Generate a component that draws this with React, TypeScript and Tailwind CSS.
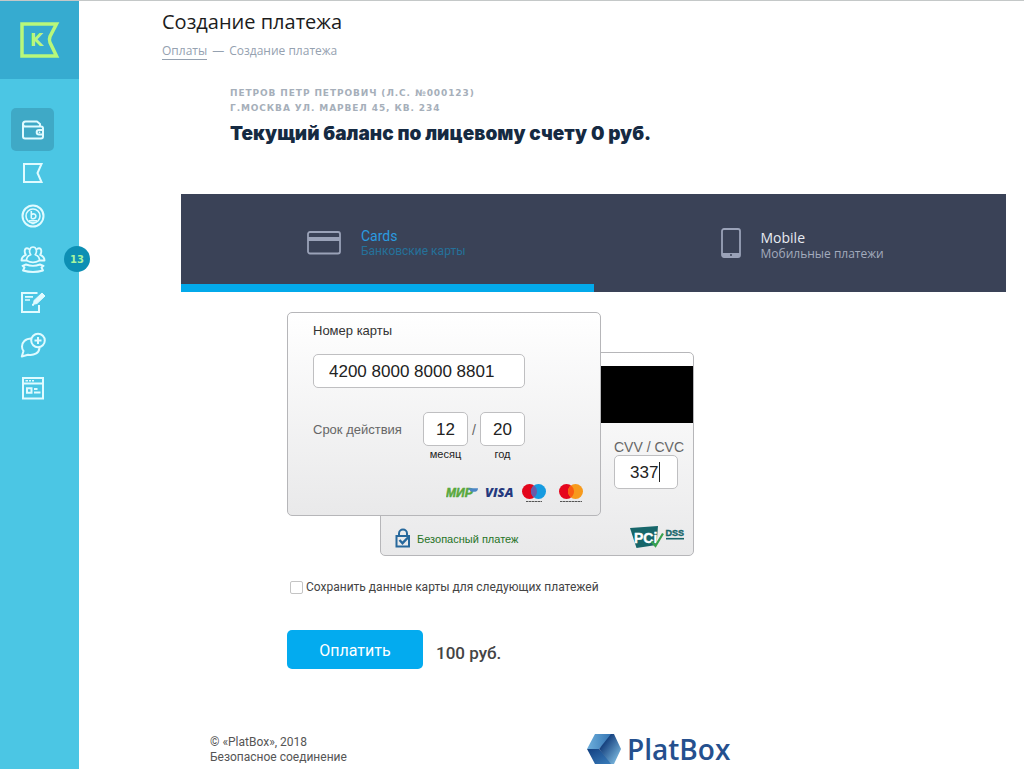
import React, { useState } from 'react';

const icons = {
  wallet: (
    <svg width="24" height="24" viewBox="0 0 24 24" fill="none" stroke="currentColor" strokeWidth="2" strokeLinejoin="round">
      <path d="M2 5.500v13a2 2 0 0 0 2 2h16a2 2 0 0 0 2-2V10.500a2 2 0 0 0-2-2H4.500A2.500 2.500 0 0 1 2 6a2.500 2.500 0 0 1 2.500-2.500H16l3 2.500v2.500" />
      <path d="M22 12h-4a2.300 2.300 0 0 0 0 4.600h4" />
      <path d="M18.500 13.500v1.600" strokeWidth="1.500" />
    </svg>
  ),
  flag: (
    <svg width="24" height="24" viewBox="0 0 24 24" fill="none" stroke="currentColor" strokeWidth="2">
      <path d="M3 3h17.500l-4 9 4 9H3z" />
    </svg>
  ),
  coin: (
    <svg width="24" height="24" viewBox="0 0 24 24" fill="none" stroke="currentColor" strokeWidth="2">
      <circle cx="12" cy="12" r="10.500" />
      <circle cx="12" cy="12" r="7" strokeWidth="1.600" />
      <path d="M10.300 7v7.500M10.300 10.500c3-1.500 5 .2 4.500 2.200s-2.500 2.300-4.500 1.800M8 16.800h8M10.500 19.500h3" strokeWidth="1.600" />
    </svg>
  ),
  people: (
    <svg width="26" height="28" viewBox="0 0 26 28" fill="none" stroke="currentColor" strokeWidth="1.900" strokeLinejoin="round">
      <path d="M6.500 15.500h-5C1.500 12.800 3 11 5.800 9.800 4 7 4.500 3.200 7 3.200c1 0 1.800.4 2.300 1.200M19.500 15.500h5c0-2.700-1.500-4.500-4.300-5.700C22 7 21.500 3.200 19 3.200c-1 0-1.800.4-2.300 1.200" />
      <path d="M10.800 9.700C8.500 7 9.500 2 13 2s4.500 5 2.200 7.700c3 1 4.300 3 4.300 5.800-4 2.200-9 2.200-13 0 0-2.800 1.300-4.800 4.300-5.800z" strokeWidth="1.700" />
      <path d="M6 19.500c4.500 1.800 9.500 1.800 14 0l3.500 1.300-2 1.700 1.500 3c-6 1.800-14 1.800-20 0l1.500-3-2-1.700z" />
    </svg>
  ),
  edit: (
    <svg width="26" height="24" viewBox="0 0 26 24" fill="none" stroke="currentColor" strokeWidth="2">
      <path d="M17.500 3H2v19h17v-7" />
      <path d="M5 6.800h8M5 10h5" strokeWidth="1.700" />
      <path d="m14 10.500 8-7.500 3 3-8 7.500-3.500.8z" fill="currentColor" strokeWidth="1" />
      <path d="M12 14.700h2" />
    </svg>
  ),
  chat: (
    <svg width="26" height="26" viewBox="0 0 26 26" fill="none" stroke="currentColor" strokeWidth="2" strokeLinejoin="round">
      <circle cx="18" cy="8.500" r="6.800" />
      <path d="M18 5v7M14.500 8.500h7" />
      <path d="M11.500 6.500C5 6.500 2 10.500 2 14.500c0 2 .6 3.500 1.500 4.500L1.800 24.500 8 22.800c6 1 11-1.500 11.500-7" />
    </svg>
  ),
  browser: (
    <svg width="24" height="24" viewBox="0 0 24 24" fill="none" stroke="currentColor" strokeWidth="2">
      <path d="M2 2h20v20.500H2zM2 7.500h20" />
      <path d="M4.500 4.800H7M8 4.800h2M11 4.800h2" strokeWidth="1.400" />
      <path d="M6 12.300h4.500v4.500H6z" />
      <path d="M13 13h3.500M13 16.500h6.500" />
    </svg>
  ),
};

const menu = [
  { label: 'Оплаты', icon: icons.wallet, active: true },
  { label: 'Услуги', icon: icons.flag },
  { label: 'Начисления', icon: icons.coin },
  { label: 'Собрания', icon: icons.people, badge: 13 },
  { label: 'Заявки', icon: icons.edit },
  { label: 'Сообщения', icon: icons.chat },
  { label: 'Новости', icon: icons.browser },
];

const Sidebar: React.FC = () => (
  <aside className="w-[79px] shrink-0 bg-[#4bc6e4]">
    <a href="#" aria-label="Главная" className="flex h-[78px] items-center justify-center bg-[#36abd0]">
      <svg width="40" height="38" viewBox="0 0 40 38" fill="none">
        <path d="M2 3h34.500l-6.500 12.500q-1.200 3 0 6L36.500 35H2z" stroke="#b8f87a" strokeWidth="3.500" />
        <text x="10" y="25" fill="#b8f87a" fontFamily="DejaVu Sans, sans-serif" fontWeight="700" fontSize="17">K</text>
      </svg>
    </a>
    <nav className="flex flex-col pt-[29px] pl-[11px]">
      {menu.map((item) => (
        <a
          key={item.label}
          href="#"
          aria-label={item.label}
          className={`relative flex h-[43px] w-[43px] items-center justify-center rounded-[5px] text-[#e0fbff] ${
            item.active ? 'bg-[#3fa9c6]' : ''
          }`}
        >
          {item.icon}
          {item.badge && (
            <span className="absolute top-[9px] left-[53px] flex h-[26px] w-[26px] items-center justify-center rounded-full bg-[#0d8fb4] font-['DejaVu_Sans',sans-serif] text-[10px] font-bold text-[#a8f5a0]">
              {item.badge}
            </span>
          )}
        </a>
      ))}
    </nav>
  </aside>
);

const PaymentTabs: React.FC = () => {
  const [tab, setTab] = useState('cards');

  return (
    <div role="tablist" className="mr-[18px] ml-[102px] grid grid-cols-2 bg-[#3a4257]">
      <button
        role="tab"
        aria-selected={tab === 'cards'}
        onClick={() => setTab('cards')}
        className={`flex h-[98px] items-center gap-[20px] border-b-8 pt-[8px] pl-[126px] text-left ${
          tab === 'cards' ? 'border-[#03a9ea]' : 'border-transparent'
        }`}
      >
        <svg width="34" height="24" viewBox="0 0 34 24" fill="none" stroke="#9aa2b8">
          <rect x="1" y="1" width="32" height="21.500" rx="2" strokeWidth="1.800" />
          <path d="M1 8h32" strokeWidth="4" />
        </svg>
        <span className="flex flex-col font-[Roboto,sans-serif]">
          <span className="text-[14px] leading-4 text-[#2b9be0]">Cards</span>
          <span className="text-[12px] leading-[15px] text-[#25719a]">Банковские карты</span>
        </span>
      </button>
      <button
        role="tab"
        aria-selected={tab === 'mobile'}
        onClick={() => setTab('mobile')}
        className={`flex h-[98px] items-center gap-[20px] border-b-8 pt-[8px] pl-[127px] text-left ${
          tab === 'mobile' ? 'border-[#03a9ea]' : 'border-transparent'
        }`}
      >
        <svg width="20" height="30" viewBox="0 0 20 30" fill="none" stroke="#9aa2b8">
          <rect x="1" y="1" width="18" height="28" rx="2" strokeWidth="1.800" />
          <path d="M1 27h18" strokeWidth="4" />
          <path d="M9 27h2" stroke="#3a4257" strokeWidth="1.500" />
        </svg>
        <span className="flex flex-col pt-[4px] font-['Open_Sans',sans-serif]">
          <span className="text-[14px] leading-4 text-[#e8ebf2]">Mobile</span>
          <span className="text-[12px] leading-[15px] text-[#a3abbd]">Мобильные платежи</span>
        </span>
      </button>
    </div>
  );
};

const PaymentLogos: React.FC = () => (
  <div className="flex items-center gap-[6px]">
    <svg width="33" height="20" viewBox="0 0 33 20" fontFamily="Liberation Sans, sans-serif" fontWeight="700" fontStyle="italic" fontSize="12">
      <text x="0" y="14" fill="#58a83c" stroke="#58a83c" strokeWidth=".5">МИР</text>
      <path d="M22 5.300h10c0 2.200-1.300 3.500-3 3.500h-4z" fill="#4b86c4" />
    </svg>
    <svg width="31" height="20" viewBox="0 0 31 20">
      <text x="0" y="14" fill="#25397e" fontFamily="Open Sans, sans-serif" fontWeight="800" fontStyle="italic" fontSize="13">VISA</text>
    </svg>
    <svg width="24" height="20" viewBox="0 0 24 20">
      <circle cx="7.500" cy="8.500" r="7.500" fill="#e3051b" />
      <circle cx="16.500" cy="8.500" r="7.500" fill="#169be0" />
      <path d="M12 2.500a7.500 7.500 0 0 1 0 12 7.500 7.500 0 0 1 0-12z" fill="#6c5aa8" />
      <path d="M4 18.500h16" stroke="#555" strokeDasharray="2.500 .5" />
    </svg>
    <svg width="24" height="20" viewBox="0 0 24 20" className="ml-[7px]">
      <circle cx="7.500" cy="8.500" r="7.500" fill="#e5051d" />
      <circle cx="16.500" cy="8.500" r="7.500" fill="#f79a1c" />
      <path d="M12 2.500a7.500 7.500 0 0 1 0 12 7.500 7.500 0 0 1 0-12z" fill="#fa5c12" />
      <path d="M1 18.500h22" stroke="#555" strokeDasharray="2.500 .5" />
    </svg>
  </div>
);

const PciLogo: React.FC = () => (
  <svg width="55" height="23" viewBox="0 0 55 23" fontFamily="Liberation Sans, sans-serif" fontWeight="700">
    <path d="M0 2 28 0l-1.500 19-20 3z" fill="#17666a" />
    <text x="4" y="17" fill="#fff" stroke="#fff" strokeWidth=".4" fontSize="14">PCi</text>
    <path d="m21.500 15.500 4 4.500L33 7.500" fill="none" stroke="#37a24c" strokeWidth="2.200" />
    <text x="35.500" y="10" fill="#17666a" stroke="#17666a" strokeWidth=".4" fontSize="9">DSS</text>
    <path d="M36 12.700h18" stroke="#17666a" strokeWidth="1.600" />
  </svg>
);

const LockIcon: React.FC = () => (
  <svg width="16" height="20" viewBox="0 0 16 20" fill="none" stroke="#27689c" strokeWidth="2">
    <path d="M4 8V5.500a4 4 0 0 1 8 0V8" />
    <rect x="1.500" y="8" width="12.500" height="10.500" />
    <path d="m4.500 12 3 3.200L13.500 9" strokeWidth="2.400" />
  </svg>
);

const fieldClass =
  'h-[34px] rounded-[5px] border border-[#bfbfc1] bg-white pt-[2px] text-[17px] text-[#222] outline-none';

const CardForm: React.FC = () => {
  const [number, setNumber] = useState('4200 8000 8000 8801');
  const [month, setMonth] = useState('12');
  const [year, setYear] = useState('20');
  const [cvv, setCvv] = useState('337');

  return (
    <div className="grid w-[407px] font-['Liberation_Sans',sans-serif]">
      <div className="z-10 col-start-1 row-start-1 flex h-[204px] w-[314px] flex-col rounded-[5px] border border-[#b6b6b9] bg-linear-to-b from-white to-[#e9e9ea] pt-[9px] pr-[17px] pl-[25px]">
        <label htmlFor="card-number" className="text-[13px] leading-[18px] text-[#333]">Номер карты</label>
        <input
          id="card-number"
          value={number}
          onChange={(e) => setNumber(e.target.value)}
          className={`${fieldClass} mt-[14px] w-[212px] px-[15px]`}
        />
        <div className="mt-[24px] flex items-start">
          <span className="w-[110px] text-[13px] leading-[36px] text-[#666]">Срок действия</span>
          <div className="flex flex-col items-center">
            <input
              id="card-month"
              value={month}
              onChange={(e) => setMonth(e.target.value)}
              className={`${fieldClass} w-[45px] text-center`}
            />
            <label htmlFor="card-month" className="text-[11px] leading-[16px] text-[#222]">месяц</label>
          </div>
          <span className="w-[12px] text-center text-[14px] leading-[36px] text-[#666]">/</span>
          <div className="flex flex-col items-center">
            <input
              id="card-year"
              value={year}
              onChange={(e) => setYear(e.target.value)}
              className={`${fieldClass} w-[45px] text-center`}
            />
            <label htmlFor="card-year" className="text-[11px] leading-[16px] text-[#222]">год</label>
          </div>
        </div>
        <div className="mt-[21px] flex justify-end">
          <PaymentLogos />
        </div>
      </div>

      <div className="col-start-1 row-start-1 mt-[40px] ml-[93px] flex h-[204px] flex-col rounded-[5px] border border-[#b6b6b9] bg-linear-to-b from-white to-[#e9e9ea]">
        <div className="mt-[13px] h-[57px] bg-black" />
        <div className="mt-[16px] mr-[15px] flex w-[64px] flex-col self-end">
          <label htmlFor="card-cvv" className="text-[14px] leading-[16px] whitespace-nowrap text-[#666]">CVV / CVC</label>
          <div className="relative">
            <input
              id="card-cvv"
              value={cvv}
              onChange={(e) => setCvv(e.target.value)}
              className={`${fieldClass} w-full px-[15px]`}
            />
            <span className="absolute top-[7px] left-[45px] h-[20px] w-px bg-[#222]" />
          </div>
        </div>
        <div className="mt-[37px] flex items-center pr-[8px] pl-[14px]">
          <LockIcon />
          <span className="grow pt-[2px] pl-[6px] text-[11px] leading-4 text-[#267326]">Безопасный платеж</span>
          <PciLogo />
        </div>
      </div>
    </div>
  );
};

const PlatBoxLogo: React.FC = () => (
  <div className="flex items-center gap-[5px]">
    <svg width="36" height="32" viewBox="0 0 36 32">
      <defs>
        <linearGradient id="pb-front" x1="0" y1="0" x2="1" y2="1">
          <stop offset="0.200" stopColor="#0b3474" />
          <stop offset="1" stopColor="#8fd0f2" />
        </linearGradient>
        <linearGradient id="pb-side" x1="0" y1="0" x2="1" y2="0">
          <stop offset="0" stopColor="#6fb0dc" />
          <stop offset="1" stopColor="#2f70b0" />
        </linearGradient>
        <linearGradient id="pb-base" x1="0" y1="0" x2="1" y2="1">
          <stop offset="0" stopColor="#123f80" />
          <stop offset="1" stopColor="#3b7fbd" />
        </linearGradient>
      </defs>
      <path d="M9 1h18L13 16H1z" fill="url(#pb-side)" />
      <path d="M1 16h12l14 15H9z" fill="url(#pb-base)" />
      <path d="M25 1h3l7 15-7 15h-3L13 16z" fill="url(#pb-front)" />
    </svg>
    <span className="font-['Open_Sans',sans-serif] text-[28px] leading-8 font-semibold text-[#25508e]">PlatBox</span>
  </div>
);

const App: React.FC = () => {
  const [save, setSave] = useState(false);

  return (
    <div className="flex min-h-screen border-t border-[#c4c8c8] bg-white">
      <Sidebar />
      <main className="flex min-w-0 grow flex-col">
        <header className="pt-[7px] pl-[83px] font-['Open_Sans',sans-serif]">
          <h1 className="text-[20px] leading-[28px] text-[#1c1c1c]">Создание платежа</h1>
          <div className="mt-[6px] flex gap-[5px] text-[12px] leading-[17px] text-[#95a1b0]">
            <a href="#" className="border-b border-[#95a1b0]">Оплаты</a>
            <span>—</span>
            <span>Создание платежа</span>
          </div>
        </header>

        <section className="mt-[26px] pl-[151px]">
          <p className="font-['DejaVu_Sans',sans-serif] text-[9px] leading-[15px] font-bold tracking-widest text-[#a6afba] uppercase">
            Петров Петр Петрович (л.с. №000123)
            <br />
            г.Москва ул. Марвел 45, кв. 234
          </p>
          <h2 className="mt-[4px] font-[Inter,sans-serif] text-[19px] leading-[28px] font-black text-[#152a42]">
            Текущий баланс по лицевому счету 0 руб.
          </h2>
        </section>

        <div className="mt-[46px]">
          <PaymentTabs />
        </div>

        <form className="mt-[20px] pl-[208px] font-[Roboto,sans-serif]" onSubmit={(e) => e.preventDefault()}>
          <CardForm />
          <label className="mt-[22px] flex items-center gap-[3px] pl-[3px] text-[12px] leading-[18px] text-[#444]">
            <input
              type="checkbox"
              checked={save}
              onChange={(e) => setSave(e.target.checked)}
              className="h-[13px] w-[13px] appearance-none rounded-[2px] border border-[#c4c4c4] bg-white checked:bg-[#03a9ea]"
            />
            Сохранить данные карты для следующих платежей
          </label>
          <div className="mt-[34px] flex items-center gap-[13px]">
            <button type="submit" className="h-[39px] w-[136px] rounded-[5px] bg-[#03abef] pt-[2px] text-[16px] text-white">
              Оплатить
            </button>
            <span className="pt-[6px] text-[17px] leading-6 font-medium text-[#444]">100 руб.</span>
          </div>
        </form>

        <footer className="mt-auto flex items-start pb-[4px] pl-[131px] font-[Roboto,sans-serif]">
          <p className="w-[376px] pt-[2px] text-[12px] leading-[15px] text-[#555]">
            © «PlatBox», 2018
            <br />
            Безопасное соединение
          </p>
          <PlatBoxLogo />
        </footer>
      </main>
    </div>
  );
};

export default App;
